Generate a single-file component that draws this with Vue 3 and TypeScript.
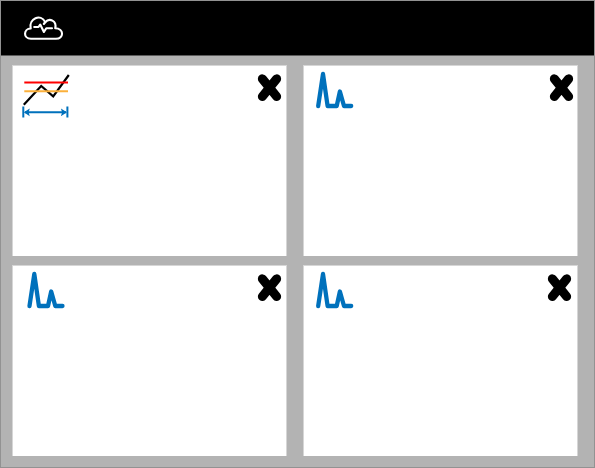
<script setup lang="ts">
import { ref } from 'vue'

interface Panel {
  id: number
  kind: 'trend' | 'peaks'
  iconX: number
  closeX: number
  closeY: number
}

const panels = ref<Panel[]>([
  { id: 1, kind: 'trend', iconX: 0, closeX: 257.5, closeY: 22.7 },
  { id: 2, kind: 'peaks', iconX: 15.2, closeX: 258.5, closeY: 22.7 },
  { id: 3, kind: 'peaks', iconX: 17.5, closeX: 257.5, closeY: 22.7 },
  { id: 4, kind: 'peaks', iconX: 15.2, closeX: 256.5, closeY: 22.7 },
])
</script>

<template>
  <div class="window">
    <header class="topbar">
      <svg class="cloud" width="42" height="28" viewBox="22 14 42 28">
        <path d="M31 38.8C22.8 38.5 23.4 28.8 30.7 28.5C28.6 18.6 40.8 13.2 45.2 22.2C49.5 17.5 57 20.8 55.2 28.2C64.4 28.6 64 38.7 56 38.8Z" />
        <path d="M43.8 24L45.3 22" />
        <path d="M34.2 27H38.5L40.2 24.5L43.9 32L46.3 28.2H52" />
      </svg>
    </header>
    <main class="grid">
      <section v-for="panel in panels" :key="panel.id" class="panel">
        <svg class="art" width="275" height="60" viewBox="0 0 275 60">
          <g v-if="panel.kind === 'trend'">
            <path class="series" d="M11.8 39.8L29.2 21L41.2 31.3L56.8 10" />
            <path class="upper" d="M12.3 17.5H56" />
            <path class="lower" d="M12.3 26.2H56" />
            <path class="range" d="M11.3 41.5V52.5M55.4 41.5V52.5M13 47.3H54" />
            <path class="tip" d="M11.8 47.3L17.8 43.4L16.6 47.3L17.8 51.2ZM54.9 47.3L48.9 43.4L50.1 47.3L48.9 51.2Z" />
          </g>
          <path
            v-else
            class="peaks"
            d="M0 41L4.8 9L9.4 41H18.5L21.7 26.5L25.8 41H33"
            :transform="`translate(${panel.iconX} 0)`"
          />
          <path
            class="close"
            d="M-7.1 -8.8L7.1 8.8M7.1 -8.8L-7.1 8.8"
            :transform="`translate(${panel.closeX} ${panel.closeY})`"
          />
        </svg>
      </section>
    </main>
  </div>
</template>

<style scoped>
.window {
  box-sizing: border-box;
  width: 595px;
  height: 468px;
  border: 1px solid #929292;
  background: #b3b3b3;
  overflow: hidden;
}

.topbar {
  box-sizing: border-box;
  height: 55px;
  padding: 13px 21px;
  border-bottom: 1px solid #5c5c5c;
  background: #000;
}

.cloud,
.art {
  display: block;
  fill: none;
}

.cloud path {
  stroke: #fff;
  stroke-width: 2.1;
  stroke-linecap: round;
  stroke-linejoin: round;
}

.grid {
  display: grid;
  grid-template-columns: 275px 275px;
  grid-template-rows: 191px 191px;
  gap: 9px 16px;
  padding: 9px 0 0 11px;
}

.panel {
  box-sizing: border-box;
  border: 1px solid #d6d6d6;
  border-bottom: 0;
  background: #fff;
}

.art {
  margin: -1px;
}

.series {
  stroke: #000;
  stroke-width: 2.2;
}

.upper {
  stroke: #ff0000;
  stroke-width: 2;
}

.lower {
  stroke: #fbb03b;
  stroke-width: 2;
}

.range {
  stroke: #0071bc;
  stroke-width: 2;
}

.tip {
  fill: #0071bc;
}

.peaks {
  stroke: #0071bc;
  stroke-width: 4.3;
  stroke-linecap: round;
  stroke-linejoin: round;
}

.close {
  stroke: #000;
  stroke-width: 9.1;
  stroke-linecap: round;
}
</style>

<style>
body {
  margin: 0;
  background: #b3b3b3;
}
</style>
